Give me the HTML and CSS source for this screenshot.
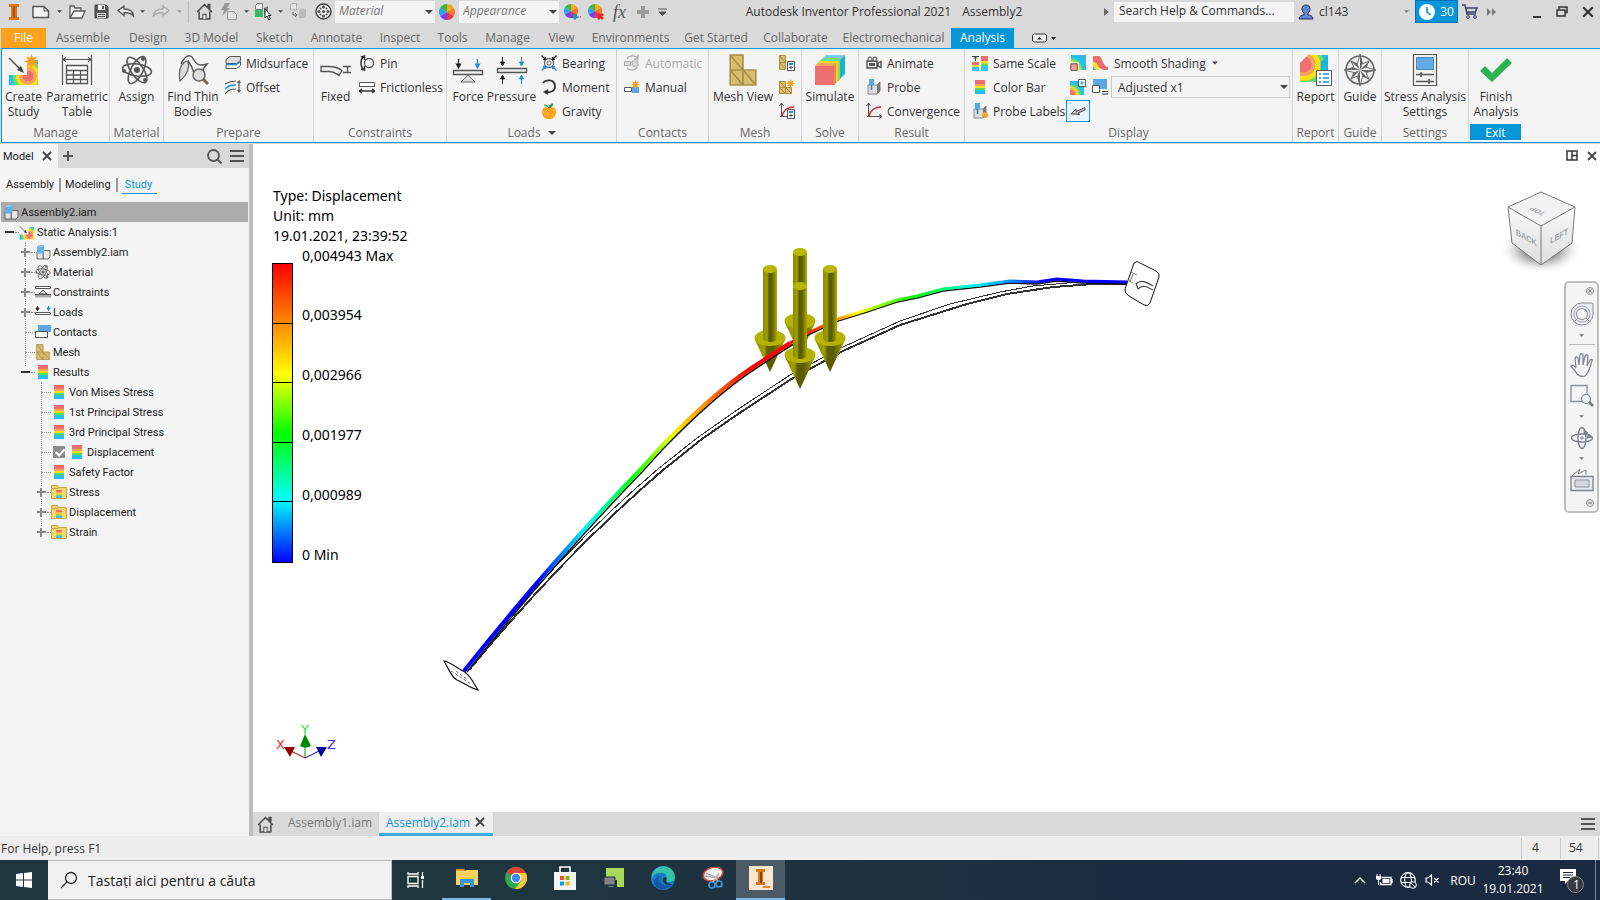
FILE: index.html
```html
<!DOCTYPE html>
<html lang="ro">
<head>
<meta charset="utf-8">
<title>Autodesk Inventor Professional 2021 - Assembly2</title>
<link rel="stylesheet" href="styles.css">
</head>
<body>
<svg class="defs" aria-hidden="true">
  <defs>
    <linearGradient id="rad1" x1="0" y1="0" x2="1" y2="0"><stop offset="0" stop-color="#8a8a00"/><stop offset=".3" stop-color="#a0a000"/><stop offset=".42" stop-color="#5c5c00"/><stop offset=".62" stop-color="#5c5c00"/><stop offset=".8" stop-color="#808000"/><stop offset="1" stop-color="#b0b000"/></linearGradient>
    <radialGradient id="heat" gradientUnits="userSpaceOnUse" cx="20" cy="22" r="20"><stop offset=".26" stop-color="#f07070"/><stop offset=".28" stop-color="#f7a35c"/><stop offset=".42" stop-color="#f7a35c"/><stop offset=".45" stop-color="#f6e016"/><stop offset=".58" stop-color="#f6e016"/><stop offset=".62" stop-color="#6fdc6f"/><stop offset=".74" stop-color="#6fdc6f"/><stop offset=".78" stop-color="#1fc8dc"/><stop offset="1" stop-color="#35b4f5"/></radialGradient>
    <radialGradient id="heatl" cx="0" cy="1" r="1.1"><stop offset=".3" stop-color="#f07070"/><stop offset=".36" stop-color="#f7a35c"/><stop offset=".5" stop-color="#f6e016"/><stop offset=".62" stop-color="#6fdc6f"/><stop offset=".75" stop-color="#1fc8dc"/><stop offset="1" stop-color="#35b4f5"/></radialGradient>
    <radialGradient id="heatt" cx=".12" cy=".35" r=".95"><stop offset=".3" stop-color="#f07070"/><stop offset=".32" stop-color="#f7a35c"/><stop offset=".45" stop-color="#f7a35c"/><stop offset=".47" stop-color="#f6e016"/><stop offset=".63" stop-color="#f6e016"/><stop offset=".65" stop-color="#6fdc6f"/><stop offset=".76" stop-color="#6fdc6f"/><stop offset=".8" stop-color="#1fc8dc"/><stop offset="1" stop-color="#35b4f5"/></radialGradient>
    <symbol id="caret" viewBox="0 0 8 4"><path d="M0 0h8L4 4z" fill="currentColor"/></symbol>
    <symbol id="x" viewBox="0 0 10 10"><path d="M1 1l8 8M9 1L1 9" stroke="currentColor" stroke-width="1.8"/></symbol>
    <symbol id="bars" viewBox="0 0 14 12"><path d="M0 1h14M0 6h14M0 11h14" stroke="currentColor" stroke-width="2"/></symbol>
    <symbol id="home" viewBox="0 0 16 16"><path d="M1 8.500L8 1.500l7 7M3 8v7h10V8M11.500 4.500v-3h1.500v4" fill="none" stroke="#4a4a4a" stroke-width="1.400"/><path d="M6.500 15v-4.500h3V15" fill="#fff" stroke="#4a4a4a"/></symbol>
    <symbol id="iam" viewBox="0 0 16 16"><path d="M8 8l1.500-1.500H15V13l-2 2H8z" fill="#e6e6e6" stroke="#666"/><path d="M2 8h6v7H2z" fill="#e6e6e6" stroke="#666"/><path d="M2 3l1.500-2H9v7L7.500 9.500H2z" fill="#5fb2ea"/><path d="M2 3l1.500-2H9L7.500 3z" fill="#8dcaf3"/></symbol>
    <symbol id="rain" viewBox="0 0 10 14"><path d="M0 0h10v4H0z" fill="#ef6d6d"/><path d="M0 4h10v2H0z" fill="#f7a35c"/><path d="M0 6h10v2H0z" fill="#f6e016"/><path d="M0 8h10v2H0z" fill="#5fd86a"/><path d="M0 10h10v2H0z" fill="#1fc8dc"/><path d="M0 12h10v2H0z" fill="#35b4f5"/></symbol>
    <symbol id="folder" viewBox="0 0 16 14"><path d="M.5 13.500V.5h6l1 2h8v11z" fill="#f8d66b" stroke="#c9a44a"/><path d="M1 3.500h6" stroke="#c9a44a"/><use href="#rain" x="5" y="5" width="6" height="8"/></symbol>
    <symbol id="wheel" viewBox="-9 -9 18 18"><path d="M0 0L0-8A8 8 0 0 1 6.900-4z" fill="#f6a81c"/><path d="M0 0L6.900-4A8 8 0 0 1 6.900 4z" fill="#f47a20"/><path d="M0 0L6.900 4A8 8 0 0 1 0 8z" fill="#ec3a3a"/><path d="M0 0L0 8A8 8 0 0 1-6.900 4z" fill="#7a3bf0"/><path d="M0 0L-6.900 4A8 8 0 0 1-6.900-4z" fill="#2aa5e8"/><path d="M0 0L-6.900-4A8 8 0 0 1 0-8z" fill="#3ab54a"/></symbol>
    <symbol id="burst" viewBox="-8 -8 16 16"><path d="M0-8L1.500-3.700 5.600-5.600 3.700-1.500 8 0 3.700 1.500 5.600 5.600 1.500 3.700 0 8-1.500 3.700-5.600 5.600-3.700 1.500-8 0-3.700-1.500-5.600-5.600-1.500-3.700z" fill="#f7a11a"/></symbol>
    <symbol id="atom" viewBox="0 0 32 32"><g fill="none" stroke="#5a5a5a" stroke-width="1.600"><ellipse cx="16" cy="16" rx="14.500" ry="6" transform="rotate(8 16 16)"/><ellipse cx="16" cy="16" rx="15" ry="6" transform="rotate(55 16 16)"/><ellipse cx="16" cy="16" rx="15" ry="6" transform="rotate(118 16 16)"/></g><circle cx="16" cy="16" r="3" fill="#555"/><circle cx="3" cy="17" r="2" fill="#555"/><circle cx="22" cy="5" r="2" fill="#555"/><circle cx="24" cy="26" r="2" fill="#555"/></symbol>
    <symbol id="mesh" viewBox="0 0 26 30"><path d="M1 1h12v14h12v14H1z" fill="#d9bd6c" stroke="#a88e47" stroke-width="1.500"/><path d="M1 15h12v14M1 1l12 14L25 29M1 15l12 14" fill="none" stroke="#a88e47" stroke-width="1.500"/></symbol>
    <symbol id="conv" viewBox="0 0 16 16"><path d="M2.500 0v14M1 13.500h15M.5 3l2-3 2 3M13 11.500l3 2-3 2" fill="none" stroke="#555"/><path d="M3 13C5 6 9 4 15 4" fill="none" stroke="#c92a35" stroke-width="1.500"/></symbol>
    <symbol id="probe" viewBox="0 0 16 16"><path d="M2 6h9l3-3v9l-3 3H2z" fill="#dcdcdc" stroke="#888"/><path d="M11 6v9l3-3V3z" fill="#777"/><path d="M3 0h5v6H3z" fill="#5aa9e6"/><path d="M5.500 6v5" stroke="#2f7fc4" stroke-width="1.500"/></symbol>
    <symbol id="stress" viewBox="0 0 32 32"><path d="M1 21h18V10l4-4h7v25H1z" fill="url(#heat)"/><path d="M1 4l13 13" stroke="#555" stroke-width="1.600"/><path d="M16 19l-7-3 4-4z" fill="#444"/></symbol>
    <symbol id="arrow" viewBox="0 0 32 108" overflow="visible"><path d="M1 75L16 107 31 75z" fill="url(#rad1)"/><ellipse cx="16" cy="73" rx="15.500" ry="8" fill="#b3b300"/><path d="M9 4v70c2 4 12 4 14 0V4z" fill="url(#rad1)"/><ellipse cx="16" cy="4" rx="7" ry="4" fill="#b8b800"/></symbol>
  </defs>
</svg>

<header class="titlebar">
  <button aria-label="Inventor"><svg width="10" height="16" viewBox="0 0 10 16"><path d="M0 0h10v3H8v10h2v3H0v-3h2V3H0z" fill="#d9781c"/><path d="M4 2h2v12H4z" fill="#a94f08"/></svg></button>
  <button aria-label="New"><svg width="18" height="14" viewBox="0 0 18 14"><path d="M1 1.500h11l4.500 4.500v6.500H1z" fill="#f4f4f4" stroke="#555" stroke-width="1.500"/><path d="M12 1.500V6h4.500" fill="none" stroke="#555"/></svg></button>
  <button aria-label="New options"><svg class="c5"><use href="#caret"/></svg></button>
  <button aria-label="Open"><svg width="17" height="14" viewBox="0 0 17 14"><path d="M1 13V1h4l1 2h6v3M1 13l4-7h11l-3 7z" fill="#f4f4f4" stroke="#555" stroke-width="1.300"/></svg></button>
  <button aria-label="Save"><svg width="15" height="15" viewBox="0 0 15 15"><path d="M1 1h11l2 2v11H1z" fill="#555" stroke="#444"/><path d="M4 1h7v5H4z" fill="#eee"/><path d="M8 2h2v3H8z" fill="#555"/><path d="M3 9h9v5H3z" fill="#ddd"/><path d="M4 10.500h7M4 12.500h7" stroke="#555"/></svg></button>
  <button aria-label="Undo"><svg width="18" height="13" viewBox="0 0 18 13"><path d="M1 5.500L7 1v3c5 0 9 2 9.500 7C14 8 11 7.500 7 7.500v3z" fill="#f4f4f4" stroke="#555" stroke-width="1.300"/></svg></button>
  <button aria-label="Undo list"><svg class="c5"><use href="#caret"/></svg></button>
  <button aria-label="Redo" disabled><svg width="18" height="13" viewBox="0 0 18 13"><path d="M17 5.500L11 1v3c-5 0-9 2-9.500 7C4 8 7 7.500 11 7.500v3z" fill="#ddd" stroke="#aaa" stroke-width="1.300"/></svg></button>
  <button aria-label="Redo list"><svg class="c5 dim"><use href="#caret"/></svg></button>
  <span class="rule"></span>
  <button aria-label="Home"><svg width="17" height="17"><use href="#home"/></svg></button>
  <button aria-label="Update" disabled><svg width="18" height="17" viewBox="0 0 18 17"><path d="M5 0h5L7 5h3L2 13l2-6H1z" fill="#999"/><path d="M7.500 8.500h6l3 3v5h-9z" fill="#e4e4e4" stroke="#999"/></svg></button>
  <button aria-label="Update options"><svg class="c5"><use href="#caret"/></svg></button>
  <button aria-label="Select"><svg width="18" height="17" viewBox="0 0 18 17"><path d="M1.500 2.500l2-2h5v6h-7z" fill="#eee" stroke="#777"/><path d="M1 7h8v7H1z" fill="#3ab56a"/><path d="M10 5l4-2v8h-4z" fill="#777"/><path d="M11 6v9l2-2 2 4 1.500-1-2-3.500H17z" fill="#fff" stroke="#222"/></svg></button>
  <button aria-label="Select options"><svg class="c5"><use href="#caret"/></svg></button>
  <button aria-label="Return" disabled><svg width="18" height="17" viewBox="0 0 18 17"><path d="M1.500 2l1.500-1.500h4.500v6.500h-6z" fill="#e4e4e4" stroke="#aaa"/><path d="M10 7l1.500-1.500H17V14l-1 1h-6z" fill="#bbb"/><path d="M4 9v3h4M6 10l2 2-2 2" fill="none" stroke="#666"/></svg></button>
  <button aria-label="Adjust"><svg width="17" height="17" viewBox="0 0 17 17"><circle cx="8.500" cy="8.500" r="7.500" fill="#eee" stroke="#444" stroke-width="1.500"/><g fill="#555"><circle cx="8.500" cy="8.500" r="1.600"/><circle cx="8.500" cy="4" r="1.600"/><circle cx="8.500" cy="13" r="1.600"/><circle cx="4" cy="8.500" r="1.600"/><circle cx="13" cy="8.500" r="1.600"/><circle cx="5.500" cy="5.500" r="1"/><circle cx="11.500" cy="5.500" r="1"/><circle cx="5.500" cy="11.500" r="1"/><circle cx="11.500" cy="11.500" r="1"/></g></svg></button>
  <label class="combo"><select aria-label="Material"><option>Material</option></select><svg class="c7"><use href="#caret"/></svg></label>
  <button aria-label="Appearance browser"><svg width="18" height="18"><use href="#wheel"/></svg></button>
  <label class="combo"><select aria-label="Appearance"><option>Appearance</option></select><svg class="c7"><use href="#caret"/></svg></label>
  <button aria-label="Adjust appearance"><svg width="18" height="18" viewBox="0 0 18 18"><use href="#wheel" width="16" height="16"/><path d="M8 14h10" stroke="#444" stroke-dasharray="2 1"/><path d="M10 11h4v4l-2 2-2-2z" fill="#1f8de8"/></svg></button>
  <button aria-label="Clear appearance"><svg width="18" height="18" viewBox="0 0 18 18"><use href="#wheel" width="16" height="16"/><path d="M11 11l5 5M16 11l-5 5" stroke="#e22" stroke-width="2.500"/></svg></button>
  <button class="fx" aria-label="Parameters">fx</button>
  <button aria-label="Add"><svg width="12" height="12"><path d="M4 0h4v4h4v4H8v4H4V8H0V4h4z" fill="#9a9a9a"/></svg></button>
  <button aria-label="Customize"><svg width="9" height="8" viewBox="0 0 9 8"><path d="M0 1h9M1 4h7L4.500 7.500z" fill="#555" stroke="#555"/></svg></button>
  <h1 class="apptitle"><span>Autodesk Inventor Professional 2021</span><span>Assembly2</span></h1>
  <svg width="5" height="8" viewBox="0 0 5 8"><path d="M0 0l5 4-5 4z" fill="#666"/></svg>
  <input class="help" type="text" aria-label="Search Help" value="Search Help &amp; Commands...">
  <button aria-label="Account"><svg width="16" height="16" viewBox="0 0 16 16"><path d="M1 15c0-3 3-4 5-4V9C3 7 3 1 8 1s5 6 2 8v2c2 0 5 1 5 4z" fill="#5f87d8" stroke="#26304f"/></svg></button>
  <span class="user">cl143</span>
  <button aria-label="Account menu"><svg class="c5 mid"><use href="#caret"/></svg></button>
  <button class="trial"><svg width="16" height="16" viewBox="0 0 16 16"><circle cx="8" cy="8" r="8" fill="#fff"/><path d="M8 3v5l3.500 3" fill="none" stroke="#0696d7" stroke-width="1.600"/></svg>30</button>
  <button aria-label="Store"><svg width="17" height="15" viewBox="0 0 17 15"><path d="M0 1h3l2 9h9M4 4h11l-1.500 4H5" fill="none" stroke="#3a3f6b" stroke-width="1.500"/><circle cx="6" cy="13" r="1.400" fill="none" stroke="#3a3f6b"/><circle cx="13" cy="13" r="1.400" fill="none" stroke="#3a3f6b"/></svg></button>
  <button aria-label="More"><svg width="9" height="8" viewBox="0 0 9 8"><path d="M0 0l4 4-4 4zM5 0l4 4-4 4z" fill="#777"/></svg></button>
  <span></span>
  <button class="low" aria-label="Minimize"><svg width="8" height="2"><path d="M0 0h8v2H0z" fill="#333"/></svg></button>
  <button aria-label="Restore"><svg width="12" height="11" viewBox="0 0 12 11"><path d="M3 3.500V1h8v5.500H9M1 4h8v6H1z" fill="none" stroke="#333" stroke-width="1.500"/></svg></button>
  <button aria-label="Close"><svg class="s12"><use href="#x"/></svg></button>
</header>

<nav class="tabs">
  <a class="file" href="#">File</a><a href="#">Assemble</a><a href="#">Design</a><a href="#">3D Model</a><a href="#">Sketch</a><a href="#">Annotate</a><a href="#">Inspect</a><a href="#">Tools</a><a href="#">Manage</a><a href="#">View</a><a href="#">Environments</a><a href="#">Get Started</a><a href="#">Collaborate</a><a href="#">Electromechanical</a><a class="on" href="#">Analysis</a>
  <button aria-label="Ribbon display"><svg width="24" height="10" viewBox="0 0 24 10"><rect x=".5" y="1" width="14" height="8" rx="2" fill="#eee" stroke="#333"/><path d="M5 6.500h5L7.500 4zM19 4h5l-2.500 3z" fill="#222"/></svg></button>
</nav>

<section class="ribbon">
  <div class="group g-manage"><div class="body">
    <button class="big"><svg width="32" height="32" viewBox="0 0 32 32"><use href="#stress"/><use href="#burst" x="16" width="15" height="15"/></svg>Create<br>Study</button>
    <button class="big"><svg width="32" height="32" viewBox="0 0 32 32"><path d="M1.500 1v30M30.500 1v30M2 5.500h28M5 3.500l-3 2 3 2M27 3.500l3 2-3 2" fill="none" stroke="#555" stroke-width="1.200"/><path d="M5.500 11.500h21v18h-21zM5.500 16.500h21M5.500 21h21M5.500 25.500h21M12.500 16v14M19.500 16v14" fill="#fff" stroke="#555" stroke-width="1.300"/></svg>Parametric<br>Table</button>
  </div><h2>Manage</h2></div>
  <div class="group"><div class="body one">
    <button class="big"><svg width="32" height="32"><use href="#atom"/></svg>Assign</button>
  </div><h2>Material</h2></div>
  <div class="group g-prepare"><div class="body">
    <button class="big"><svg width="32" height="32" viewBox="0 0 32 32"><path d="M3 27C1 16 4 8 11 7c2 7-1 14-8 20z" fill="#dcdcdc" stroke="#666" stroke-width="1.300"/><path d="M4 10C8 2 12 0 15 3c5 9 8 9 15 7-3 4-5 6-5 9M11 7c4 5 5 8 6 12" fill="none" stroke="#555" stroke-width="1.500"/><path d="M26 25l5 5" stroke="#8a6239" stroke-width="3"/><circle cx="22" cy="21" r="6" fill="#ddd" stroke="#666" stroke-width="1.500"/></svg>Find Thin<br>Bodies</button>
    <div class="stack">
      <button><svg viewBox="0 0 16 16"><path d="M1 4.500l4-3h10.500v4l-4 3H1z" fill="#ddd" stroke="#555"/><path d="M1 9.500h10l4.500-3" fill="none" stroke="#1f8de8" stroke-width="1.500"/><path d="M1 9.500v4h10.500l4-3v-4" fill="none" stroke="#555"/></svg>Midsurface</button>
      <button><svg viewBox="0 0 16 16"><path d="M0 5c5-3 7-3 11-3M0 15c4-5 7-5 11-5M14 2v11M12.500 4L14 2l1.500 2M12.500 11l1.500 2 1.500-2" fill="none" stroke="#555" stroke-width="1.200"/><path d="M0 10c4-4 7-4 11-4" fill="none" stroke="#1f8de8" stroke-width="1.600"/></svg>Offset</button>
    </div>
  </div><h2>Prepare</h2></div>
  <div class="group g-constr"><div class="body">
    <button class="big"><svg width="32" height="32" viewBox="0 0 32 32"><path d="M1 12.500h8c6 0 9 1 13 4l-3 5c-3-2-5-4-10-4H1z" fill="#eee" stroke="#555" stroke-width="1.300"/><path d="M23 12.500h8M23 18.500h8M27.500 12.500v6" stroke="#555" stroke-width="1.400"/></svg>Fixed</button>
    <div class="stack">
      <button><svg viewBox="0 0 16 16"><circle cx="10" cy="8" r="4.500" fill="none" stroke="#555" stroke-width="1.300"/><path d="M5 1.500C1 4 1 12 5 14.500M2 2l3.500-1V5M2 14l3.500 1v-4" fill="none" stroke="#333" stroke-width="1.500"/></svg>Pin</button>
      <button><svg viewBox="0 0 16 16"><path d="M.5 3.500h15v4H.5z" fill="#fff" stroke="#555"/><path d="M0 12h16M3 10l-3 2 3 2M13 10l3 2-3 2" fill="none" stroke="#333" stroke-width="1.300"/></svg>Frictionless</button>
    </div>
  </div><h2>Constraints</h2></div>
  <div class="group g-loads"><div class="body">
    <button class="big"><svg width="32" height="32" viewBox="0 0 32 32"><path d="M1.500 16.500h29v4h-29z" fill="#eee" stroke="#555" stroke-width="1.400"/><path d="M16 21l7 7H9z" fill="#ddd" stroke="#666"/><path d="M6.500 5v7M4.500 10h4l-2 4z" fill="#222" stroke="#222" stroke-width="1.200"/><path d="M25.500 5v7M23.500 10h4l-2 4z" fill="#1f8de8" stroke="#1f8de8" stroke-width="1.200"/></svg>Force</button>
    <button class="big"><svg width="32" height="32" viewBox="0 0 32 32"><path d="M1.500 14.500h29v4h-29z" fill="#eee" stroke="#555" stroke-width="1.400"/><path d="M6.500 3v7M4.500 8h4l-2 4zM6.500 30v-7M4.500 25h4l-2-4z" fill="#222" stroke="#222"/><path d="M25.500 3v7M23.500 8h4l-2 4zM25.500 30v-7M23.500 25h4l-2-4z" fill="#1f8de8" stroke="#1f8de8"/></svg>Pressure</button>
    <div class="stack">
      <button><svg viewBox="0 0 16 16"><circle cx="8" cy="8" r="4.500" fill="none" stroke="#666" stroke-width="1.300"/><circle cx="8" cy="8" r="2" fill="none" stroke="#666"/><path d="M.5.5L4 4M2 4.500h2.500V2M15.500.5L12 4M14 4.500h-2.500V2" fill="none" stroke="#222" stroke-width="1.300"/><path d="M.5 15.500L4 12M2 11.500h2.500V14M15.500 15.500L12 12M14 11.500h-2.500V14" fill="none" stroke="#1f8de8" stroke-width="1.300"/></svg>Bearing</button>
      <button><svg viewBox="0 0 16 16"><path d="M2 4c3-4 12-4 12 3.500C14 12 10 14 4 13" fill="none" stroke="#333" stroke-width="1.800"/><path d="M2 13l5-3v6z" fill="#333"/></svg>Moment</button>
      <button><svg viewBox="0 0 16 16"><path d="M8 5c4-2 7 0 7 4s-3 7-5 7H6c-2 0-5-3-5-7s3-6 7-4z" fill="#ffa61f"/><path d="M8 5c0-3 2-4 4-4-1 3-2 3-4 4zM3 2c2 0 4 1 5 3" fill="#2e9d52" stroke="#2e9d52"/></svg>Gravity</button>
    </div>
  </div><h2>Loads <svg class="c7"><use href="#caret"/></svg></h2></div>
  <div class="group g-contacts"><div class="body">
    <div class="stack">
      <button disabled><svg viewBox="0 0 16 16"><path d="M.5 6.500h6v4h-6zM8 6h6v5H8z" fill="#ddd" stroke="#aaa"/><path d="M3 4c2-4 8-4 11-1M14 0v4h-4M13 12c-2 4-7 4-10 1" fill="none" stroke="#aaa" stroke-width="1.400"/></svg>Automatic</button>
      <button><svg viewBox="0 0 16 16"><path d="M.5 8.500h7v4h-7z" fill="#fff" stroke="#555"/><path d="M8 8h7v6H8z" fill="#5aa9e6"/><use href="#burst" x="7" y="1" width="9" height="9"/></svg>Manual</button>
    </div>
  </div><h2>Contacts</h2></div>
  <div class="group g-mesh"><div class="body">
    <button class="big"><svg width="32" height="32"><use href="#mesh"/></svg>Mesh View</button>
    <div class="stack">
      <button aria-label="Mesh settings"><svg viewBox="0 0 16 16"><path d="M.5.500h6v7h-6zM.5 7.500h6v7h-6zM.5.500l6 7M.5 7.500l6 7" fill="#d9bd6c" stroke="#a88e47"/><path d="M8.500 6.500h7v9h-7z" fill="#fff" stroke="#555"/><path d="M10 8h4v2h-4z" fill="#1f8de8"/><path d="M10 12.500h4M12 11v3" stroke="#555"/></svg></button>
      <button aria-label="Local mesh control"><svg viewBox="0 0 16 16"><path d="M.5 2.500h6v6h-6zM.5 8.500h6v6h-6zM6.500 8.500h6v6h-6zM.5 2.500l6 6 6 6M.5 8.500l6 6" fill="#d9bd6c" stroke="#a88e47"/><use href="#burst" x="7" width="9" height="9"/></svg></button>
      <button aria-label="Convergence settings"><svg viewBox="0 0 16 16"><use href="#conv"/><path d="M8.500 6.500h7v9h-7z" fill="#fff" stroke="#555"/><path d="M10 8h4v2h-4z" fill="#1f8de8"/><path d="M10 12.500h4M12 11v3" stroke="#555"/></svg></button>
    </div>
  </div><h2>Mesh</h2></div>
  <div class="group"><div class="body one">
    <button class="big"><svg width="32" height="32" viewBox="0 0 32 32"><path d="M1 12L12 1h19L20 12z" fill="#7fc4f2"/><path d="M9 4h19l-3 3H6z" fill="#6fdc8f"/><path d="M6 7h19l-2 2H4z" fill="#f6e016"/><path d="M4 9h19l-3 3H1z" fill="#f7a35c"/><path d="M20 12L31 1v19L20 31z" fill="#19b5c8"/><path d="M20 12l6-6v19l-6 6z" fill="#8fd860"/><path d="M20 12l4-4v19l-4 4z" fill="#f6d516"/><path d="M20 12l2-2v19l-2 2z" fill="#f08b4c"/><path d="M1 12h19v19H1z" fill="#ec7070"/></svg>Simulate</button>
  </div><h2>Solve</h2></div>
  <div class="group g-result"><div class="body">
    <div class="stack">
      <button><svg viewBox="0 0 16 16"><path d="M1 6h10v7H1zM12 8l3-1.500v6L12 11z" fill="#eee" stroke="#444" stroke-width="1.300"/><circle cx="4" cy="4" r="2" fill="#fff" stroke="#444"/><circle cx="9" cy="4" r="2" fill="#fff" stroke="#444"/><path d="M3 8h6v3H3z" fill="#555"/></svg>Animate</button>
      <button><svg viewBox="0 0 16 16"><use href="#probe"/></svg>Probe</button>
      <button><svg viewBox="0 0 16 16"><use href="#conv"/></svg>Convergence</button>
    </div>
  </div><h2>Result</h2></div>
  <div class="group g-display"><div class="body">
    <div class="stack">
      <button><svg viewBox="0 0 16 16"><path d="M0 7h7v9H0z" fill="#f6e016"/><path d="M0 7h7v3H0z" fill="#ef6d6d"/><path d="M0 12h7v4H0z" fill="#35c4f0"/><path d="M9 1h7v15H9z" fill="#f6e016"/><path d="M9 1h7v5H9z" fill="#ef6d6d"/><path d="M9 11h7v5H9z" fill="#35c4f0"/><path d="M9 8.500h7v2.500H9z" fill="#5fd86a"/><path d="M0 1.500h7M3.500 2v4M2 3.500l1.500-1.500L5 3.500" stroke="#444" fill="none"/></svg>Same Scale</button>
      <button><svg viewBox="0 0 16 16"><use href="#rain" x="3" y="1" width="10" height="14"/></svg>Color Bar</button>
      <button><svg viewBox="0 0 16 16"><use href="#probe"/><circle cx="13" cy="12" r="3" fill="#f0a52a"/></svg>Probe Labels</button>
    </div>
    <div class="stack rows">
      <div><button aria-label="Maximum value"><svg viewBox="0 0 16 16"><path d="M1 0h15v15H1z" fill="url(#heatl)"/><path d="M.8 8.800h6.500v6.500H.8z" fill="#f07070" stroke="#fff" stroke-width="3"/><path d="M.8 8.800h6.500v6.500H.8z" fill="#f7a090" stroke="#555"/></svg></button><button class="shade"><svg viewBox="0 0 16 16"><path d="M1 1h6c3 0 4 11 9 11v3C9 15 6 13 5 9L1 7z" fill="#ec6d6d"/><path d="M1 7c4 0 5 3 6 8H1z" fill="#f6e016"/><path d="M1 11l3 4H1z" fill="#35b4f5"/></svg>Smooth Shading<svg class="c5"><use href="#caret"/></svg></button></div>
      <div><button aria-label="Boundary condition"><svg viewBox="0 0 16 16"><path d="M0 2h14v14H0z" fill="url(#heatl)"/><path d="M8.500.5h7v7h-7z" fill="#fff" stroke="#555"/><path d="M10.500 2.500h3v3h-3z" fill="#35b4f5"/></svg></button><button aria-label="Displacement display"><svg viewBox="0 0 16 16"><path d="M1 0h14v10H1z" fill="#5aa9e6"/><path d="M.5 6.500h7v7h-7z" fill="#fff" stroke="#555"/><path d="M10 12.500h6M10 15h6" stroke="#333"/></svg></button><label class="combo scale"><select aria-label="Displacement scale"><option>Adjusted x1</option></select><svg class="c7"><use href="#caret"/></svg></label></div>
      <div><button class="pressed" aria-label="Loads visible"><svg viewBox="0 0 16 16"><path d="M1 11l5-5v2.500l9-4v2.500L8 10l2 1.500z" fill="#bbb" stroke="#555"/></svg></button></div>
    </div>
  </div><h2>Display</h2></div>
  <div class="group"><div class="body one">
    <button class="big"><svg width="32" height="32" viewBox="0 0 32 32"><path d="M0 9l8-8h20v20l-7 7H0z" fill="url(#heatt)"/><path d="M28 1v20h-7V8z" fill="#19b5d8"/><path d="M16.500 16.500h15v15h-15z" fill="#fff" stroke="#555"/><path d="M19 20h2M19 24h2M19 28h2M23 20h6M23 24h6M23 28h6" stroke="#1f8de8" stroke-width="1.500"/></svg>Report</button>
  </div><h2>Report</h2></div>
  <div class="group"><div class="body one">
    <button class="big"><svg width="32" height="32" viewBox="0 0 32 32"><circle cx="16" cy="16" r="14" fill="#eee" stroke="#666" stroke-width="1.600"/><path d="M16 0l2.500 10L25 7l-3 6.500L32 16l-10 2.500L25 25l-6.500-3L16 32l-2.500-10L7 25l3-6.500L0 16l10-2.500L7 7l6.500 3z" fill="#fff" stroke="#666"/><path d="M16 0v16l2.500-6zM32 16H16l6 2.500zM16 32V16l-2.500 6zM0 16h16l-6-2.500zM16 16l9-9-3 6.500zM16 16l9 9-6.500-3zM16 16l-9 9 3-6.500zM16 16L7 7l6.500 3z" fill="#666"/></svg>Guide</button>
  </div><h2>Guide</h2></div>
  <div class="group"><div class="body one">
    <button class="big"><svg width="32" height="32" viewBox="0 0 32 32"><path d="M4.500.5h23v31h-23z" fill="#f4f4f4" stroke="#555" stroke-width="1.200"/><path d="M7.500 3.500h17v12h-17z" fill="#62abe8" stroke="#4b87b8"/><path d="M7 20.500h18M7 27.500h18M12 18v5M20 25v5" stroke="#555" stroke-width="1.500"/></svg>Stress Analysis<br>Settings</button>
  </div><h2>Settings</h2></div>
  <div class="group"><div class="body one">
    <button class="big"><svg width="32" height="32" viewBox="0 0 32 32"><path d="M0 17l5-5 7 7L27 4l5 5-20 19z" fill="#2bb34f"/></svg>Finish<br>Analysis</button>
  </div><h2 class="exit">Exit</h2></div>
  <div class="rest"></div>
</section>

<main class="work">
  <aside class="browser">
    <div class="ptabs"><div class="ptab">Model<button aria-label="Close panel"><svg class="s10"><use href="#x"/></svg></button></div><button aria-label="Add panel"><svg width="10" height="10"><path d="M5 0v10M0 5h10" stroke="#555" stroke-width="2"/></svg></button><span class="grow"></span><button aria-label="Search"><svg width="15" height="15" viewBox="0 0 15 15"><circle cx="6.500" cy="6.500" r="5.500" fill="none" stroke="#555" stroke-width="1.800"/><path d="M10 10l4.500 4.500" stroke="#555" stroke-width="2"/></svg></button><button class="menu" aria-label="Panel menu"><svg width="14" height="12"><use href="#bars"/></svg></button></div>
    <nav class="modes"><a href="#">Assembly</a><a href="#">Modeling</a><a class="on" href="#">Study</a></nav>
    <ul class="tree">
      <li><div class="row root"><svg><use href="#iam"/></svg>Assembly2.iam</div></li>
      <li><div class="row l1"><button class="tw minus" aria-label="Collapse"></button><i></i><svg><use href="#stress"/></svg>Static Analysis:1</div>
        <ul class="sub2">
          <li><div class="row l2"><button class="tw" aria-label="Expand"></button><i></i><svg><use href="#iam"/></svg>Assembly2.iam</div></li>
          <li><div class="row l2"><button class="tw" aria-label="Expand"></button><i></i><svg><use href="#atom"/></svg>Material</div></li>
          <li><div class="row l2"><button class="tw" aria-label="Expand"></button><i></i><svg viewBox="0 0 16 14"><path d="M.5 1.500h15v2H.5z" fill="#fff" stroke="#555"/><path d="M8 5l4 4H4z" fill="#ddd" stroke="#555"/><path d="M0 9.500h16v3H0z" fill="#aaa"/><path d="M0 9.500h16" stroke="#555"/></svg>Constraints</div></li>
          <li><div class="row l2"><button class="tw" aria-label="Expand"></button><i></i><svg viewBox="0 0 16 14"><path d="M.5 7.500h15v2H.5z" fill="#fff" stroke="#555"/><path d="M2.500 1v4M1 3h3L2.500 5.500z" fill="#222" stroke="#222"/><path d="M13.500 1v4M12 3h3l-1.500 2.500z" fill="#1f8de8" stroke="#1f8de8"/></svg>Loads</div></li>
          <li><div class="row l2 leaf"><span></span><svg viewBox="0 0 16 16"><path d="M3 1h13v7H3z" fill="#5aa9e6"/><path d="M.5 7.500h12v6H.5z" fill="#fff" stroke="#555"/></svg>Contacts</div></li>
          <li><div class="row l2 leaf"><span></span><svg><use href="#mesh"/></svg>Mesh</div></li>
          <li><div class="row l2"><button class="tw minus" aria-label="Collapse"></button><i></i><svg><use href="#rain" y="1" height="14"/></svg>Results</div>
            <ul class="sub3">
              <li><div class="row l3 leaf"><span></span><svg><use href="#rain" y="1" height="14"/></svg>Von Mises Stress</div></li>
              <li><div class="row l3 leaf"><span></span><svg><use href="#rain" y="1" height="14"/></svg>1st Principal Stress</div></li>
              <li><div class="row l3 leaf"><span></span><svg><use href="#rain" y="1" height="14"/></svg>3rd Principal Stress</div></li>
              <li><label class="row l3 leaf"><span></span><input type="checkbox" checked><svg><use href="#rain" y="1" height="14"/></svg>Displacement</label></li>
              <li><div class="row l3 leaf"><span></span><svg><use href="#rain" y="1" height="14"/></svg>Safety Factor</div></li>
              <li><div class="row l3"><button class="tw" aria-label="Expand"></button><i></i><svg><use href="#folder"/></svg>Stress</div></li>
              <li><div class="row l3"><button class="tw" aria-label="Expand"></button><i></i><svg><use href="#folder"/></svg>Displacement</div></li>
              <li><div class="row l3"><button class="tw" aria-label="Expand"></button><i></i><svg><use href="#folder"/></svg>Strain</div></li>
            </ul></li>
        </ul></li>
    </ul>
  </aside>

  <section class="stage">
    <div class="view">
      <svg class="scene" width="1347" height="668" viewBox="253 144 1347 668">
        <defs>
          <linearGradient id="disp" gradientUnits="userSpaceOnUse" x1="464" y1="0" x2="1130" y2="0">
            <stop offset="0" stop-color="#0000ff"/><stop offset=".11" stop-color="#0000ff"/><stop offset=".15" stop-color="#0088ff"/><stop offset=".18" stop-color="#00f0ff"/><stop offset=".22" stop-color="#00ff80"/><stop offset=".25" stop-color="#00ff10"/><stop offset=".28" stop-color="#60ff00"/><stop offset=".31" stop-color="#e8ff00"/><stop offset=".345" stop-color="#ffb000"/><stop offset=".38" stop-color="#ff6000"/><stop offset=".43" stop-color="#ff0000"/><stop offset=".5" stop-color="#ff0000"/><stop offset=".54" stop-color="#ff5000"/><stop offset=".57" stop-color="#ffb000"/><stop offset=".59" stop-color="#ffff00"/><stop offset=".63" stop-color="#80ff00"/><stop offset=".68" stop-color="#00ff10"/><stop offset=".72" stop-color="#00ff70"/><stop offset=".77" stop-color="#00f0ff"/><stop offset=".82" stop-color="#0090ff"/><stop offset=".85" stop-color="#0030ff"/><stop offset=".87" stop-color="#0000ff"/><stop offset="1" stop-color="#0000ff"/>
          </linearGradient>
          <linearGradient id="cube" x1="0" y1="0" x2="0" y2="1"><stop offset="0" stop-color="#f8f8f8"/><stop offset="1" stop-color="#dedede"/></linearGradient>
          <radialGradient id="shade"><stop offset=".4" stop-color="#999"/><stop offset="1" stop-color="#fff" stop-opacity="0"/></radialGradient>
        </defs>
        <g fill="none" stroke="#333" stroke-width="1" shape-rendering="crispEdges">
          <path d="M466 670Q560 552 658 469L697 438L737 410L790 375L843 347L900 321L950 304L1000 292L1033 286L1067 283L1127 282"/>
          <path d="M469 670Q564 555 663 470L702 439L741 412L793 378L843 351L900 325L967 304L1007 294L1053 287L1093 284L1127 284" stroke-width="2"/>
        </g>
        <use href="#arrow" x="784" y="248" width="32" height="108"/>
        <use href="#arrow" x="754" y="265" width="32" height="108"/>
        <path d="M467 672Q550 567 643 471L662 450Q715 395 755 369L792 345L808 335L838 321L867 312L897 302L917 298L943 291L980 287L1010 283L1037 284L1057 281L1083 283L1127 284" fill="none" stroke="#111" stroke-width="1.500"/>
        <path d="M464 671Q548 565 641 469L660 448Q713 393 753 367L790 343" fill="none" stroke="url(#disp)" stroke-width="4"/>
        <path d="M790 343L808 333L838 319L867 310L897 300L917 296L943 289L980 285L1010 281L1037 282L1057 279L1083 281L1127 282" fill="none" stroke="url(#disp)" stroke-width="3"/>
        <use href="#arrow" x="814" y="265" width="32" height="108"/>
        <use href="#arrow" x="784" y="282" width="32" height="108"/>
        <path d="M1134 263q3-3 6 0l16 8q4 2 3 6l-9 26q-2 4-6 2l-15-9q-5-3-4-7z" fill="#fff" stroke="#111"/>
        <path d="M1131 272l6 3M1133 274l-3 8M1128 280l5 3" fill="none" stroke="#777"/><path d="M1136 284c5-5 10-2 17 2M1138 289c4-4 8-3 15 1M1136 283l2 6" fill="none" stroke="#444" stroke-width="1.200"/>
        <path d="M444 661C449 661 458 669 463 671C470 674 474 684 478 690C470 688 464 683 457 680C451 677 449 669 444 661z" fill="#fff" stroke="#111" stroke-width="1.200"/>
        <path d="M451 671l20 13M456 671l12 9" stroke="#667" stroke-dasharray="3 2"/>
        <g><path d="M305 758V740" stroke="#090"/><path d="M305 758L289 750" stroke="#a00"/><path d="M305 758L321 750" stroke="#00a"/><path d="M305 734l6 12q-6 3-11 0z" fill="#008a00"/><path d="M284 747l11 0-5 10z" fill="#900"/><path d="M327 747l-11 0 5 10z" fill="#009"/></g>
        <g class="axis"><text x="276" y="749" fill="#f03030">X</text><text x="301" y="734" fill="#30e030">Y</text><text x="327" y="749" fill="#3030f0">Z</text></g>
        <ellipse cx="1541" cy="250" rx="42" ry="24" fill="url(#shade)"/>
        <path d="M1508 208L1541 226V265L1512 243z" fill="url(#cube)"/><path d="M1575 208L1541 226V265L1572 243z" fill="url(#cube)"/><path d="M1541 192L1575 207L1541 226L1508 207z" fill="#f2f2f2"/>
        <path d="M1541 192L1575 207L1572 243L1541 265L1512 243L1508 207zM1508 207L1541 226L1575 207M1541 226V265" fill="none" stroke="#777"/>
        <g class="face"><text transform="matrix(.8 .44 .05 1 1516 235)">BACK</text><text transform="matrix(.8 -.44 -.05 1 1550 244)">LEFT</text><text transform="matrix(-.7 -.34 .7 -.4 1546 213)">TOP</text></g>
      </svg>
      <div class="legend">
        <p>Type: Displacement</p><p>Unit: mm</p><p>19.01.2021, 23:39:52</p>
        <p class="max">0,004943 Max</p>
        <div class="scalebar"><div class="ramp"><b></b><b></b><b></b><b></b><b></b></div>
        <ol><li>0,003954</li><li>0,002966</li><li>0,001977</li><li>0,000989</li><li>0 Min</li></ol></div>
      </div>
      <div class="winctl"><button aria-label="Tile"><svg width="12" height="11"><path d="M1 1h10v9H1zM6 1v9M6 5.500h5" fill="none" stroke="#333" stroke-width="1.500"/></svg></button><button aria-label="Close view"><svg class="s10"><use href="#x"/></svg></button></div>
      <div class="navbar">
        <button class="tiny" aria-label="Close navigation bar"><svg width="8" height="8" viewBox="0 0 8 8"><circle cx="4" cy="4" r="3.500" fill="#ddd" stroke="#999"/><path d="M2.500 2.500l3 3M5.500 2.500l-3 3" stroke="#777"/></svg></button>
        <button aria-label="Wheel"><svg width="24" height="24" viewBox="0 0 24 24"><path d="M12 1h10q1 0 1 1v10a11 11 0 1 1-11-11z" fill="#e9ebef" stroke="#8b8f96"/><circle cx="12" cy="12" r="8" fill="none" stroke="#a8acb2"/><circle cx="12" cy="12" r="5.500" fill="#f7f7f7" stroke="#8b8f96"/><path d="M8 16l-3 3M16 16l3 3" stroke="#8b8f96"/></svg></button>
        <svg class="c5 mid"><use href="#caret"/></svg><hr>
        <button aria-label="Pan"><svg width="24" height="24" viewBox="0 0 24 24"><path d="M7 21C5 17 2 15 1 13c1-1 3-1 5 2L5 5c1-2 2-1 3 0l1 7 1-10c1-2 3-1 3 0v10l2-9c1-2 3-1 3 0l-1 10 3-6c1-1 3-1 2 1-2 5-3 12-7 15-3 1-6 0-8-2z" fill="#f4f4f4" stroke="#7d828a" stroke-width="1.200"/></svg></button>
        <button aria-label="Zoom"><svg width="24" height="24" viewBox="0 0 24 24"><path d="M1 1.500h16v16H1z" fill="#f4f4f4" stroke="#8b8f96" stroke-width="1.300"/><circle cx="16" cy="15" r="4.500" fill="#eef3f3" stroke="#7d828a" stroke-width="1.200"/><path d="M19 18l4 4" stroke="#777" stroke-width="2.500"/></svg></button>
        <svg class="c5 mid"><use href="#caret"/></svg>
        <button aria-label="Orbit"><svg width="24" height="24" viewBox="0 0 24 24"><ellipse cx="12" cy="12" rx="4" ry="10.500" fill="none" stroke="#7d828a" stroke-width="1.400"/><ellipse cx="12" cy="12" rx="10.500" ry="4" fill="none" stroke="#7d828a" stroke-width="1.400"/><path d="M10 12h4M12 10v4M14 4l4 3-4 2zM19 8l3 3-5 1z" fill="#7d828a" stroke="#7d828a"/></svg></button>
        <svg class="c5 mid"><use href="#caret"/></svg>
        <button aria-label="Look at"><svg width="24" height="24" viewBox="0 0 24 24"><path d="M1 8.500h22v14H1z" fill="#e9ebef" stroke="#7d828a" stroke-width="1.300"/><path d="M5 12h14v7H5z" fill="#d5d8dd" stroke="#8b8f96"/><path d="M2 8l8-7-2 5 8-4v5" fill="none" stroke="#7d828a"/></svg></button>
        <button class="tiny" aria-label="Options"><svg width="8" height="8" viewBox="0 0 8 8"><circle cx="4" cy="4" r="3.500" fill="#ddd" stroke="#999"/><path d="M2 4h4" stroke="#777"/></svg></button>
      </div>
    </div>
    <div class="docs"><button aria-label="Home"><svg width="17" height="17"><use href="#home"/></svg></button><a href="#">Assembly1.iam</a><a class="on" href="#">Assembly2.iam <svg class="s10"><use href="#x"/></svg></a><span class="grow"></span><button class="menu" aria-label="Document list"><svg width="14" height="12"><use href="#bars"/></svg></button></div>
  </section>
</main>

<div class="status"><span>For Help, press F1</span><span class="cell">4</span><span class="cell">54</span></div>

<footer class="taskbar">
  <button class="start" aria-label="Start"><svg width="16" height="16" viewBox="0 0 16 16"><path d="M0 2l7-1v6.500H0zM8 1l8-1v7.500H8zM0 8.500h7V15l-7-1zM8 8.500h8V16l-8-1z" fill="#fff"/></svg></button>
  <label class="find"><svg width="18" height="18" viewBox="0 0 18 18"><circle cx="11" cy="7" r="5.500" fill="none" stroke="#222" stroke-width="1.300"/><path d="M7 11l-6 6" stroke="#222" stroke-width="1.300"/></svg><input type="text" aria-label="Search" value="Tastați aici pentru a căuta"></label>
  <button class="tview" aria-label="Task view"><svg width="18" height="16" viewBox="0 0 18 16"><path d="M1 4.500h10v7H1zM1 0v2h10V0M1 16v-2h10v2M15.500 0v4M15.500 8v8" fill="none" stroke="#fff" stroke-width="1.300"/><path d="M14 4h3v3h-3z" fill="#fff"/></svg></button>
  <button class="app open" aria-label="Explorer"><svg width="22" height="20" viewBox="0 0 22 20"><path d="M0 1h8l2 3H0z" fill="#d99a1c"/><path d="M0 3h9l1-1h12v15H0z" fill="#fcd25e"/><path d="M4 19v-8h14v8h-4v-4H8v4z" fill="#3a96dd"/></svg></button>
  <button class="app" aria-label="Chrome"><svg width="22" height="22" viewBox="-11 -11 22 22"><circle r="11" fill="#2da94f"/><path d="M0 0L-9.500-5.500A11 11 0 0 1 9.500-5.500z" fill="#db4437"/><path d="M0-5H9.800A11 11 0 0 1-1 11L5 3z" fill="#fcc934"/><circle r="5.200" fill="#fff"/><circle r="4.200" fill="#4285f4"/></svg></button>
  <button class="app" aria-label="Store"><svg width="24" height="24" viewBox="0 0 24 24"><path d="M7 6V1h10v5" fill="none" stroke="#fff" stroke-width="1.600"/><path d="M1 6h22v18H1z" fill="#f4f4f4"/><path d="M7 10h4v4H7z" fill="#f25022"/><path d="M12.500 10h4v4h-4z" fill="#7fba00"/><path d="M7 15.500h4v4H7z" fill="#00a4ef"/><path d="M12.500 15.500h4v4h-4z" fill="#ffb900"/></svg></button>
  <button class="app" aria-label="Sandbox"><svg width="22" height="22" viewBox="0 0 22 22"><path d="M3 1h18v19h-7v-7H3z" fill="#a8d95b"/><path d="M1 10h11v8H1zM5 18.500h6v2H5z" fill="#7b858a" stroke="#22363e"/></svg></button>
  <button class="app" aria-label="Edge"><svg width="24" height="24" viewBox="0 0 24 24"><circle cx="12" cy="12" r="12" fill="#1a7bc9"/><path d="M1 9C4-3 23-3 24 11c0 5-6 6-9 4 3-5-2-9-6-8C5 7 2 9 1 13z" fill="#35c1a5"/><path d="M9 10c-3 5 2 11 11 9-5 7-16 5-17-3 0-3 3-6 6-6z" fill="#1559a5"/><path d="M13 11c2 0 3 2 2 4 0 2 3 3 7 3-6 3-13-2-9-7z" fill="#1f363e"/></svg></button>
  <button class="app" aria-label="Snipping tool"><svg width="24" height="22" viewBox="0 0 24 22"><ellipse cx="13" cy="7" rx="10" ry="6.500" fill="#f2f2f2" stroke="#cf4a45" stroke-width="1.600" transform="rotate(-18 13 7)"/><path d="M4 9l14 2-12-5" fill="#d7d7d7" stroke="#999"/><circle cx="12" cy="18" r="3" fill="none" stroke="#3a96dd" stroke-width="1.700"/><circle cx="19" cy="17" r="3" fill="none" stroke="#3a96dd" stroke-width="1.700"/><path d="M13 15l6-9M18 14l-6-6" stroke="#bbb" stroke-width="1.500"/></svg></button>
  <button class="app open cur" aria-label="Inventor"><svg width="24" height="24" viewBox="0 0 24 24"><path d="M0 0h24v24H0z" fill="#fbe6cf"/><path d="M7 3h9v3h-2v10h2v3H7v-3h2V6H7z" fill="#d9781c"/><path d="M11 6h2v11h-2z" fill="#8f4206"/><path d="M14 20h7v2h-7z" fill="#ef7f31"/></svg></button>
  <span class="grow"></span>
  <button class="t24" aria-label="Hidden icons"><svg width="12" height="8"><path d="M1 7l5-5 5 5" fill="none" stroke="#fff" stroke-width="1.500"/></svg></button>
  <button class="t24" aria-label="Battery"><svg width="17" height="12" viewBox="0 0 17 12"><path d="M6 3.500h9v7H4.500V8M16 5v4" fill="none" stroke="#fff" stroke-width="1.300"/><path d="M6.500 5h7v4h-7z" fill="#fff"/><path d="M1 0v2M4 0v2M0 2.500h5v2L2.500 6 0 4.500zM2.500 6v5" stroke="#fff" fill="#fff"/></svg></button>
  <button class="t24" aria-label="Network"><svg width="17" height="17" viewBox="0 0 17 17"><circle cx="8" cy="8" r="7.300" fill="none" stroke="#fff" stroke-width="1.200"/><ellipse cx="8" cy="8" rx="3.300" ry="7.300" fill="none" stroke="#fff"/><path d="M1 5.500h14M1 10.500h14" stroke="#fff"/><circle cx="13" cy="13" r="3.300" fill="#1b2b41" stroke="#fff"/><path d="M11 11l4 4" stroke="#fff"/></svg></button>
  <button class="t24" aria-label="Muted"><svg width="15" height="12" viewBox="0 0 15 12"><path d="M1 4h2l3.500-3v10L3 8H1zM9 4l4.500 4.500M13.500 4L9 8.500" fill="none" stroke="#fff" stroke-width="1.200"/></svg></button>
  <button class="lang">ROU</button>
  <button class="clock">23:40<br>19.01.2021</button>
  <button class="notes" aria-label="Notifications"><svg width="26" height="26" viewBox="0 0 26 26"><path d="M1 2h16v12H9l-3 3v-3H1z" fill="#fff"/><path d="M4 5.500h10M4 8h10M4 10.500h7" stroke="#1b2b41"/><circle cx="16.500" cy="17.500" r="8" fill="#343a42" stroke="#888"/></svg><span>1</span></button>
  <span class="peek"></span>
</footer>
</body>
</html>
```

FILE: styles.css
```css
* { box-sizing: border-box; }
html, body { height: 100%; }
body { margin: 0; display: flex; flex-direction: column; background: #d9d9d9; color: #333; font: 12px/15px "Open Sans", "Noto Sans", sans-serif; overflow: hidden; }
button, input, select { font: inherit; color: inherit; }
button { border: 0; background: none; padding: 0; display: flex; align-items: center; justify-content: center; white-space: nowrap; }
a { color: inherit; text-decoration: none; white-space: nowrap; }
h1, h2, p, ul, ol { margin: 0; padding: 0; font: inherit; list-style: none; }
svg { flex: none; display: block; }
.defs { position: absolute; width: 0; height: 0; }
.grow { flex: 1; }
.c5 { width: 5px; height: 3px; color: #444; }
.c7 { width: 8px; height: 4px; color: #444; }
.dim { color: #999; }
.mid { color: #777; }
.menu { color: #555; }
.s10 { width: 10px; height: 10px; color: #444; }
.s12 { width: 12px; height: 12px; color: #333; }

/* title bar */
.titlebar { flex: none; height: 28px; display: grid; align-items: center; justify-items: center; padding-bottom: 6px;
  grid-template-columns: 28px 26px 10px 26px 23px 25px 9px 28px 8px 10px 22px 27px 8px 26px 8px 28px 23px 100px 24px 100px 25px 24px 23px 23px 16px 1fr 16px 180px 23px 81px 17px 43px 24px 18px 25px 24px 26px 25px; }
.rule { width: 1px; height: 22px; background: #bbb; }
.combo { position: relative; width: 100%; height: 22px; }
.combo select { appearance: none; width: 100%; height: 100%; border: 0; border-radius: 0; background: #f4f4f4; padding: 0 4px 2px; font-style: italic; color: #777; }
.combo svg { position: absolute; right: 2px; top: 9px; pointer-events: none; }
.fx { font: italic 18px/20px "Liberation Serif", serif; color: #555; }
.apptitle { display: flex; gap: 11px; white-space: nowrap; }
.help { width: 100%; height: 20px; border: 0; background: #f4f4f4; padding: 0 5px 2px; }
.user { justify-self: start; padding: 0 2px; }
.trial { width: 100%; height: 23px; gap: 5px; background: #0696d7; border: 1px solid #0a6fc0; color: #fff; }
.low { padding-top: 10px; }

/* ribbon tabs */
.tabs { flex: none; height: 20px; display: grid; padding-left: 1px; color: #666;
  grid-template-columns: 45px 74px 56px 71px 55px 69px 58px 47px 63px 45px 93px 78px 81px 115px 63px 60px; }
.tabs a { display: flex; align-items: center; justify-content: center; padding-bottom: 2px; }
.tabs .file { background: #faa21b; color: #fff; }
.tabs .on { background: #0696d7; color: #fff; }

/* ribbon */
.ribbon { flex: none; height: 95px; display: grid; background: #f4f4f4; border: 1px solid #0696d7; border-right: 0; margin-left: 1px;
  grid-template-columns: 108px 54px 150px 133px 170px 92px 93px 57px 106px 328px 46px 43px 87px 54px 1fr; }
.group { display: flex; flex-direction: column; border-right: 1px solid #d4d4d4; }
.group:nth-last-child(2) { border: 0; }
.group h2 { flex: none; height: 19px; display: flex; align-items: center; justify-content: center; gap: 7px; color: #666; }
.group .exit { background: #0696d7; color: #fff; height: 16px; margin: 0 2px 2px 1px; }
.body { flex: 1; display: grid; padding-top: 2px; align-items: start; }
.one { grid-template-columns: 1fr; }
.g-manage .body { grid-template-columns: 43px 1fr; }
.g-prepare .body { grid-template-columns: 58px 1fr; }
.g-constr .body { grid-template-columns: 43px 1fr; }
.g-loads .body { grid-template-columns: 42px 45px 1fr; }
.g-mesh .body { grid-template-columns: 68px 1fr; }
.g-display .body { grid-template-columns: 99px 1fr; }
.big { flex-direction: column; justify-content: flex-start; padding-top: 3px; width: 100%; line-height: 15px; }
.big svg { margin-bottom: 3px; }
.stack { display: grid; grid-auto-rows: 24px; padding-left: 7px; }
.g-prepare .stack { padding-left: 3px; }
.g-constr .stack { padding-left: 2px; }
.g-mesh .stack { padding-left: 2px; }
.stack button { justify-content: flex-start; gap: 5px; }
.stack button > svg:first-child { width: 16px; height: 16px; }
.stack button:disabled { color: #aaa; }
.g-display .rows { padding-left: 2px; }
.rows > div { display: flex; align-items: center; }
.rows > div > button:first-child { width: 24px; height: 22px; margin-right: 2px; justify-content: center; }
.rows .shade { gap: 6px; }
.rows .shade svg:last-child { width: 6px; height: 4px; }
.rows .scale { flex: 1; margin: 0 2px 0 3px; }
.scale select { border: 1px solid #ccc; font-style: normal; color: #333; padding: 0 6px; }
.rows > div > .pressed:first-child { border: 1px solid #0696d7; background: #e8f4fb; }

/* work area */
.work { flex: 1; min-height: 0; display: grid; grid-template-columns: 253px 1fr; margin-top: 1px; }
.browser { background: #f4f4f4; border-right: 4px solid #bdbdbd; font: 11px/15px Roboto, "Liberation Sans", sans-serif; color: #222; }
.ptabs { display: flex; align-items: center; height: 24px; background: #d9d9d9; padding-right: 5px; gap: 8px; }
.ptab { display: flex; align-items: center; gap: 8px; height: 24px; background: #f4f4f4; padding: 0 7px 0 3px; width: 58px; margin-right: -3px; }
.modes { display: flex; align-items: center; height: 34px; padding: 0 0 0 6px; }
.modes a { padding-right: 5px; margin-right: 4px; border-right: 2px solid #999; line-height: 14px; }
.modes .on { color: #0696d7; border-right: 0; border-bottom: 1px solid #0696d7; padding: 1px 5px 1px 3px; }
.row { display: flex; align-items: center; height: 20px; white-space: nowrap; }
.row svg { width: 16px; height: 16px; margin-right: 2px; }
.root { background: #ababab; margin: 0 1px; padding-left: 2px; }
.l1 { padding-left: 3px; }
.l2 { padding-left: 19px; }
.l3 { padding-left: 35px; }
.row i { width: 4px; border-top: 1px dotted #999; }
.leaf > span { width: 10px; margin-left: 6px; border-top: 1px dotted #999; }
.tw { position: relative; width: 12px; height: 12px; background: linear-gradient(#888, #888) center/9px 2px no-repeat, linear-gradient(#888, #888) center/2px 9px no-repeat, #f4f4f4; }
.minus { background: linear-gradient(#333, #333) center/9px 2px no-repeat, #f4f4f4; }
.sub2, .sub3 { position: relative; }
.sub2::before, .sub3::before { content: ""; position: absolute; left: 25px; top: 0; height: 130px; border-left: 1px dotted #999; }
.sub3::before { left: 41px; height: 150px; }
.row input { appearance: none; width: 12px; height: 12px; margin: 0 4px 0 2px; background: #8c8c8c; border-radius: 1px; position: relative; }
.row input::after { content: ""; position: absolute; left: 4px; top: 1px; width: 4px; height: 7px; border: solid #fff; border-width: 0 2px 2px 0; transform: rotate(42deg); }

/* viewport */
.stage { display: flex; flex-direction: column; min-width: 0; }
.view { position: relative; flex: 1; background: #fff; overflow: hidden; }
.scene { position: absolute; left: 0; top: 0; }
.axis { font: 13px "DejaVu Sans", sans-serif; }
.face { font: bold 9px "Liberation Sans", sans-serif; fill: #9fa2a8; }
.legend { position: relative; width: 170px; padding: 42px 0 0 20px; color: #000; font: 14px/20px "Noto Sans", sans-serif; white-space: nowrap; }
.max { padding-left: 29px; }
.scalebar { display: flex; align-items: flex-start; gap: 9px; margin-left: -1px; }
.ramp { width: 21px; height: 300px; margin-top: -3px; display: grid; grid-template-rows: repeat(5, 1fr); border: 1px solid #000; background: linear-gradient(#f00, #ff0 37%, #0f0 57%, #0ff 79%, #00f); }
.ramp b:not(:last-child) { border-bottom: 1px solid #000; }
.scalebar ol { display: grid; grid-auto-rows: 60px; padding-top: 19px; align-items: center; }
.scalebar li { line-height: 20px; }
.winctl { position: absolute; right: 3px; top: 6px; display: flex; gap: 9px; }
.navbar { position: absolute; right: 1px; top: 137px; width: 35px; height: 232px; display: flex; flex-direction: column; align-items: center; justify-content: space-between; padding: 4px 0; background: #f4f4f4; border: 2px solid #bdbdbd; border-radius: 5px; }
.navbar hr { width: 26px; margin: 0; border: 0; border-top: 1px solid #bbb; }
.tiny { align-self: flex-end; padding-right: 3px; }

.docs { flex: none; display: flex; align-items: stretch; height: 24px; background: #d9d9d9; color: #777; padding: 0 5px 0 4px; }
.docs a { display: flex; align-items: center; width: 105px; padding: 0 14px 4px; }
.docs .on { width: 114px; padding: 0 7px 1px; gap: 5px; background: #eee; border-bottom: 3px solid #3aacdf; color: #0f95d6; }
.status { flex: none; height: 24px; display: flex; align-items: center; background: #eee; padding: 0 1px; }
.status span:first-child { flex: 1; }
.cell { width: 39px; height: 21px; border-left: 1px solid #ccc; padding: 2px 0 0 10px; }
.cell:last-child { padding-left: 8px; border-right: 1px solid #ccc; }

/* taskbar */
.taskbar { flex: none; display: flex; align-items: stretch; height: 40px; background: linear-gradient(90deg, #1f363e 30%, #1b2a41 80%); color: #fff; }
.start { width: 48px; }
.find { width: 344px; display: flex; align-items: center; gap: 10px; padding-left: 12px; background: #f1f1f1; border: 1px solid #bbb; border-left: 0; color: #222; }
.find input { flex: 1; border: 0; background: none; padding: 0; font-size: 14px; }
.tview { width: 48px; margin-right: 2px; }
.app { width: 49px; padding-bottom: 2px; border-bottom: 2px solid transparent; }
.open { border-bottom-color: #76b9ed; }
.cur { background: #4b5c66; }
.t24 { width: 24px; }
.lang { width: 38px; }
.clock { width: 62px; line-height: 18px; margin-right: 14px; }
.notes { position: relative; width: 28px; margin-right: 9px; }
.notes span { position: absolute; left: 15px; top: 17px; }
.peek { width: 5px; border-left: 1px solid #7a8494; }
```
